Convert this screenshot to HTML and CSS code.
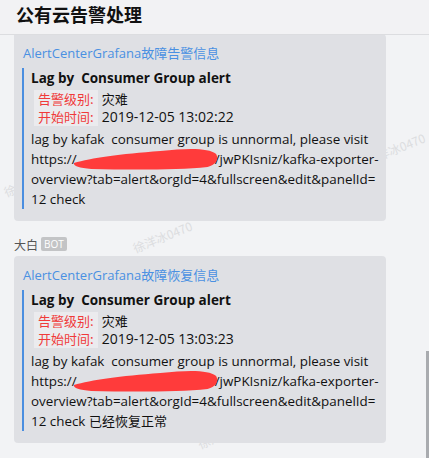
FILE: index.html
```html
<!DOCTYPE html>
<html lang="zh">
<head>
<meta charset="utf-8">
<link rel="stylesheet" href="styles.css">
</head>
<body>
<div class="page">
  <div class="wm wm1">徐洋冰0470</div>
  <div class="wm wm2">徐洋冰0470</div>
  <div class="wm wm3">徐洋冰0470</div>
  <div class="wm wm4">徐洋冰0470</div>
  <header class="header">公有云告警处理</header>
  <main class="feed">
    <section class="card card-first">
      <div class="card-title">AlertCenterGrafana故障告警信息</div>
      <div class="quote">
        <div class="q-head">Lag by&nbsp; Consumer Group alert</div>
        <div class="q-row"><span class="tag">告警级别:</span><span class="val val-cn">灾难</span></div>
        <div class="q-row"><span class="tag">开始时间:</span><span class="val">2019-12-05 13:02:22</span></div>
        <div class="q-body">
          <div class="line">lag by kafak&nbsp; consumer group is unnormal, please visit</div>
          <div class="line">https://<span class="redact"><svg class="blob" width="148" height="28" viewBox="0 0 154 28" preserveAspectRatio="none"><path d="M2 18 C 20 13, 50 9, 92 6 C 122 3, 142 3, 150 9 C 153 14, 150 20, 141 22 C 112 25, 62 25, 20 24 C 8 23, 1 21, 2 18 Z" fill="#ff3b3b"/></svg></span>/jwPKIsniz/kafka-exporter-</div>
          <div class="line">overview?tab=alert&amp;orgId=4&amp;fullscreen&amp;edit&amp;panelId=</div>
          <div class="line">12 check</div>
        </div>
      </div>
    </section>

    <div class="sender"><span class="sender-name">大白</span><span class="badge">BOT</span></div>

    <section class="card">
      <div class="card-title">AlertCenterGrafana故障恢复信息</div>
      <div class="quote">
        <div class="q-head">Lag by&nbsp; Consumer Group alert</div>
        <div class="q-row"><span class="tag">告警级别:</span><span class="val val-cn">灾难</span></div>
        <div class="q-row"><span class="tag">开始时间:</span><span class="val">2019-12-05 13:03:23</span></div>
        <div class="q-body">
          <div class="line">lag by kafak&nbsp; consumer group is unnormal, please visit</div>
          <div class="line">https://<span class="redact"><svg class="blob" width="148" height="28" viewBox="0 0 154 28" preserveAspectRatio="none"><path d="M2 18 C 20 13, 50 9, 92 6 C 122 3, 142 3, 150 9 C 153 14, 150 20, 141 22 C 112 25, 62 25, 20 24 C 8 23, 1 21, 2 18 Z" fill="#ff3b3b"/></svg></span>/jwPKIsniz/kafka-exporter-</div>
          <div class="line">overview?tab=alert&amp;orgId=4&amp;fullscreen&amp;edit&amp;panelId=</div>
          <div class="line">12 check <span class="cn">已经恢复正常</span></div>
        </div>
      </div>
    </section>
  </main>
  <div class="scroll-thumb"></div>
</div>
</body>
</html>
```

FILE: styles.css
```css
html, body {
  margin: 0;
  padding: 0;
}
body {
  background: #f2f3f5;
  font-family: "Open Sans", "Noto Sans CJK SC", sans-serif;
  color: #1b1b1b;
  width: 429px;
  height: 458px;
  overflow: hidden;
}
.page {
  position: relative;
  width: 429px;
  height: 458px;
  overflow: hidden;
}
.header {
  position: relative;
  z-index: 2;
  height: 35px;
  box-sizing: border-box;
  padding: 2px 0 0 16px;
  font-family: "Noto Sans CJK SC", sans-serif;
  font-size: 18px;
  font-weight: 700;
  line-height: 24px;
  color: #111;
  background: #f2f2f4;
  border-bottom: 1px solid #dcdde0;
}
.feed {
  position: relative;
  z-index: 1;
  display: flex;
  flex-direction: column;
  padding-left: 14px;
}
.card {
  width: 372px;
  box-sizing: border-box;
  background: #dfe0e4;
  border-radius: 4px;
  padding: 9px 8px 12px 8px;
}
.card-first {
  margin-top: -1px;
  border-top-left-radius: 0;
}
.card-title {
  font-size: 13px;
  line-height: 20px;
  color: #4a90e2;
  padding-left: 1px;
}
.quote {
  margin-top: 5px;
  border-left: 2px solid #4a8ee0;
  padding-left: 7px;
}
.q-head {
  font-size: 13.5px;
  font-weight: 700;
  line-height: 20px;
  color: #111;
}
.q-row {
  display: flex;
  align-items: center;
  height: 18px;
  margin-top: 2px;
  padding-left: 3px;
  font-size: 13px;
}
.q-row + .q-row {
  margin-top: 0;
}
.tag {
  background: #ebebee;
  color: #f03a3a;
  padding: 0 4px;
  line-height: 18px;
  font-family: "Noto Sans CJK SC", sans-serif;
}
.val {
  margin-left: 4px;
  line-height: 18px;
  font-size: 14px;
  color: #111;
}
.val-cn {
  font-family: "Noto Sans CJK SC", sans-serif;
  font-size: 13px;
}
.q-body {
  margin-top: 3px;
}
.line {
  font-size: 13.4px;
  line-height: 20px;
  white-space: nowrap;
  color: #111;
}
.cn {
  font-family: "Noto Sans CJK SC", sans-serif;
  font-size: 13px;
}
.redact {
  display: inline-block;
  width: 138px;
  height: 20px;
  vertical-align: top;
  position: relative;
}
.blob {
  position: absolute;
  left: -5px;
  top: -4px;
}
.sender {
  display: flex;
  align-items: center;
  gap: 3px;
  height: 18px;
  margin: 14px 0 3px 0;
}
.sender-name {
  font-family: "Noto Sans CJK SC", sans-serif;
  font-size: 12px;
  color: #555;
}
.badge {
  background: #c3c4c6;
  color: #fff;
  font-size: 10px;
  line-height: 14px;
  padding: 0 3px;
  border-radius: 2px;
  font-family: "Open Sans", sans-serif;
}
.wm {
  position: absolute;
  z-index: 0;
  font-family: "Noto Sans CJK SC", sans-serif;
  font-size: 12px;
  color: #dcdde0;
  transform: rotate(-22deg);
  white-space: nowrap;
}
.wm1 { left: 131px; top: 228px; }
.wm2 { left: 364px; top: 140px; }
.wm3 { left: 2px; top: 172px; }
.wm4 { left: 196px; top: 424px; }
.scroll-thumb {
  position: absolute;
  z-index: 3;
  right: 0;
  top: 351px;
  width: 3px;
  height: 107px;
  background: #a9abaf;
}
```
